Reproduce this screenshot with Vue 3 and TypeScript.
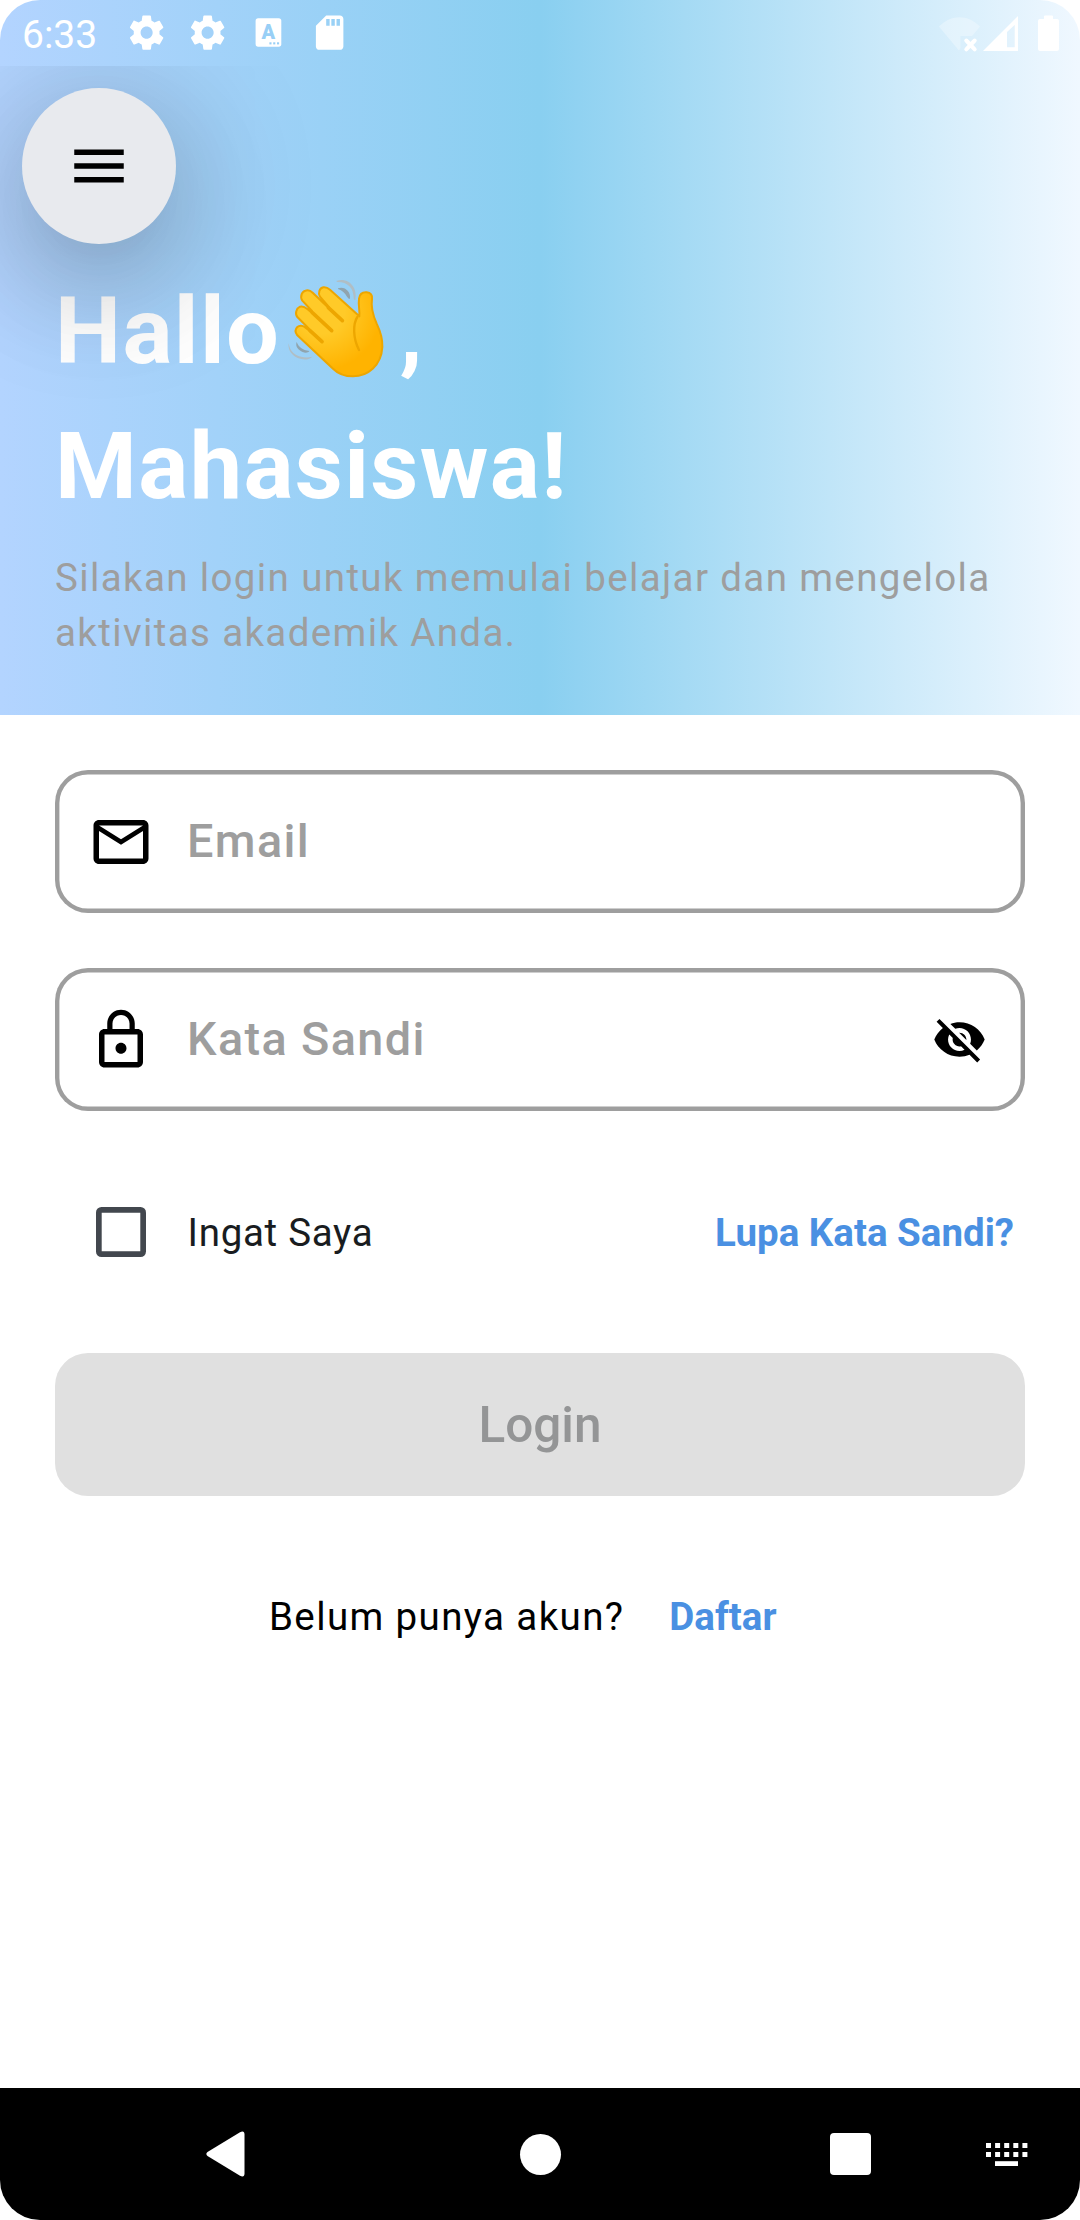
<script setup lang="ts">
interface Field {
  id: string
  label: string
  icon: string
  secret: boolean
}

const fields: Field[] = [
  {
    id: 'email',
    label: 'Email',
    icon: 'M22 6c0-1.1-.9-2-2-2H4c-1.1 0-2 .9-2 2v12c0 1.1.9 2 2 2h16c1.1 0 2-.9 2-2V6zm-2 0l-8 5-8-5h16zm0 12H4V8l8 5 8-5v10z',
    secret: false,
  },
  {
    id: 'password',
    label: 'Kata Sandi',
    icon: 'M12 17c1.1 0 2-.9 2-2s-.9-2-2-2-2 .9-2 2 .9 2 2 2zm6-9h-1V6c0-2.76-2.24-5-5-5S7 3.24 7 6v2H6c-1.1 0-2 .9-2 2v10c0 1.1.9 2 2 2h12c1.1 0 2-.9 2-2V10c0-1.1-.9-2-2-2zM8.9 6c0-1.71 1.39-3.1 3.1-3.1s3.1 1.39 3.1 3.1v2H8.9V6zM18 20H6V10h12v10z',
    secret: true,
  },
]

const gear =
  'M19.43 12.98c.04-.32.07-.64.07-.98s-.03-.66-.07-.98l2.11-1.65c.19-.15.24-.42.12-.64l-2-3.46c-.12-.22-.39-.3-.61-.22l-2.49 1c-.52-.4-1.08-.73-1.69-.98l-.38-2.65C14.46 2.18 14.25 2 14 2h-4c-.25 0-.46.18-.49.42l-.38 2.65c-.61.25-1.17.59-1.69.98l-2.49-1c-.23-.09-.49 0-.61.22l-2 3.46c-.13.22-.07.49.12.64l2.11 1.65c-.04.32-.07.65-.07.98s.03.66.07.98l-2.11 1.65c-.19.15-.24.42-.12.64l2 3.46c.12.22.39.3.61.22l2.49-1c.52.4 1.08.73 1.69.98l.38 2.65c.03.24.24.42.49.42h4c.25 0 .46-.18.49-.42l.38-2.65c.61-.25 1.17-.59 1.69-.98l2.49 1c.23.09.49 0 .61-.22l2-3.46c.12-.22.07-.49-.12-.64l-2.11-1.65zM12 15.5c-1.93 0-3.5-1.57-3.5-3.5s1.57-3.5 3.5-3.5 3.5 1.57 3.5 3.5-1.57 3.5-3.5 3.5z'

const keyColumns = [0, 1, 2, 3, 4]
</script>

<template>
  <div class="phone">
    <header class="hero">
      <div class="status">
        <span class="clock">6:33</span>
        <div class="notices">
          <svg viewBox="0 0 24 24"><path :d="gear" /></svg>
          <svg viewBox="0 0 24 24"><path :d="gear" /></svg>
          <svg viewBox="0 0 41.25 41.25">
            <rect x="7.6" y="6.3" width="25.7" height="28.4" rx="2.6" />
            <text class="badge-letter" x="20.3" y="27.4" text-anchor="middle">A</text>
            <g class="cut">
              <rect x="21.4" y="30.3" width="2.1" height="2.1" />
              <rect x="25.2" y="30.3" width="2.1" height="2.1" />
              <rect x="29" y="30.3" width="2.1" height="2.1" />
            </g>
          </svg>
          <svg viewBox="0 0 24 24">
            <path d="M18 2h-8L4.02 8 4 20c0 1.1.9 2 2 2h12c1.1 0 2-.9 2-2V4c0-1.1-.9-2-2-2zm-6 6h-2V4h2v4zm3 0h-2V4h2v4zm3 0h-2V4h2v4z" />
          </svg>
        </div>
        <svg class="radios" viewBox="0 0 124 40">
          <path class="faint" d="M1 11.5C13 -1 30 -1 42 11.5L34 21H22.5V33L21 35.5Z" />
          <path class="cross" d="M28.3 25.5L36.7 34.3M36.7 25.5L28.3 34.3" />
          <path fill-rule="evenodd" d="M45 36L80 1V36ZM69 17V32.3H76.7V10Z" />
          <path d="M106 4V1.4Q106 .5 107 .5H114Q115 .5 115 1.4V4H119Q121 4 121 6V34Q121 36 119 36H102Q100 36 100 34V6Q100 4 102 4Z" />
        </svg>
      </div>

      <div class="hero-body">
        <button class="menu" type="button" aria-label="Menu">
          <svg viewBox="0 0 24 24"><path d="M3 18h18v-2H3v2zm0-5h18v-2H3v2zm0-7v2h18V6H3z" /></svg>
        </button>
        <h1>
          Hallo<svg class="wave" viewBox="60 50 290 305">
            <defs>
              <radialGradient id="skin" gradientUnits="userSpaceOnUse" cx="160" cy="150" r="200">
                <stop offset="0.35" stop-color="#ffca28" />
                <stop offset="0.9" stop-color="#ffb300" />
              </radialGradient>
            </defs>
            <path fill="#b0bec5" d="M205 62C238 50 270 78 262 119C258 119 257 117 257 113C257 82 238 64 207 65Z" />
            <path fill="#90a4ae" d="M210 84C230 77 249 94 246 115C243 117 240 113 237 109C230 97 223 91 210 86Z" />
            <path fill="#b0bec5" d="M62 249C65 277 91 298 133 289C119 303 90 298 76 285C64 274 60 261 62 249Z" />
            <path fill="#90a4ae" d="M86 245C92 260 103 269 124 272C121 279 105 279 95 270C85 261 83 254 86 245Z" />
            <path
              class="hand"
              d="M274 168C276 150 270 135 273 115C275 101 284 95 296 96C308 97 314 104 312 116C308 140 315 165 326 190C338 215 344 235 343 260C340 315 300 348 255 348C230 348 210 340 195 325L88 225C81 216 82 206 88 200C94 194 104 195 110 200L126 213V208L88 170C80 160 85 144 96 139C106 136 112 141 118 146L132 158V152L103 121C95 109 102 93 112 91C122 88 129 92 134 97L182 143V139L156 109C149 98 155 83 166 81C174 80 180 83 186 88Z"
            />
            <path class="crease wide" d="M126 211L162 244M133 157L191 211M181 142L223 181" />
            <path class="crease" d="M268 170C255 190 254 232 273 269" />
          </svg><span class="comma">,</span><br />Mahasiswa!
        </h1>
        <p>Silakan login untuk memulai belajar dan mengelola aktivitas akademik Anda.</p>
      </div>
    </header>

    <main>
      <div v-for="field in fields" :key="field.id" class="field">
        <svg class="lead" viewBox="0 0 24 24"><path :d="field.icon" /></svg>
        <span class="label">{{ field.label }}</span>
        <svg v-if="field.secret" class="trail" viewBox="0 0 24 24">
          <path d="M12 7c2.76 0 5 2.24 5 5 0 .65-.13 1.26-.36 1.83l2.92 2.92c1.51-1.26 2.7-2.89 3.43-4.75-1.73-4.39-6-7.5-11-7.5-1.4 0-2.74.25-3.98.7l2.16 2.16C10.74 7.13 11.35 7 12 7zM2 4.27l2.28 2.28.46.46C3.08 8.3 1.78 10.02 1 12c1.73 4.39 6 7.5 11 7.5 1.55 0 3.03-.3 4.38-.84l.42.42L19.73 22 21 20.73 3.27 3 2 4.27zM7.53 9.8l1.55 1.55c-.05.21-.08.43-.08.65 0 1.66 1.34 3 3 3 .22 0 .44-.03.65-.08l1.55 1.55c-.67.33-1.41.53-2.2.53-2.76 0-5-2.24-5-5 0-.79.2-1.53.53-2.2zm4.31-.78l3.15 3.15.02-.16c0-1.66-1.34-3-3-3l-.17.01z" />
        </svg>
      </div>

      <div class="options">
        <span class="checkbox" role="checkbox" aria-checked="false"></span>
        <span class="remember">Ingat Saya</span>
        <a class="link forgot">Lupa Kata Sandi?</a>
      </div>

      <button class="login" type="button" disabled>Login</button>

      <div class="signup">
        <span class="question">Belum punya akun?</span>
        <a class="link">Daftar</a>
      </div>
    </main>

    <nav>
      <svg class="back" viewBox="0 0 40 46"><path d="M1.5 21L34 1.2Q38.5 -.8 38.5 3.5V42.5Q38.5 46.8 34 44.8L1.5 25Q-.8 23 1.5 21Z" /></svg>
      <span class="home"></span>
      <span class="recent"></span>
      <svg class="keys" viewBox="0 0 42 23">
        <template v-for="col in keyColumns" :key="col">
          <rect :x="col * 9.1" y="0" width="5" height="5" />
          <rect :x="col * 9.1" y="9" width="5" height="5" />
        </template>
        <rect x="9" y="18.2" width="23" height="4.8" />
      </svg>
    </nav>
  </div>
</template>

<style>
body {
  margin: 0;
  background: #fff;
}
</style>

<style scoped>
.phone {
  width: 1080px;
  height: 2220px;
  display: flex;
  flex-direction: column;
  overflow: hidden;
  border-radius: 40px;
  background: #fff;
  font-family: Roboto, "Liberation Sans", sans-serif;
}
svg {
  display: block;
  flex: none;
}
button {
  border: 0;
  padding: 0;
  font-family: inherit;
}

.hero {
  height: 714.5px;
  flex: none;
  background: linear-gradient(90deg, #b3d4ff 0%, #89cff0 50%, #f0f8ff 100%);
}
.status {
  height: 66px;
  display: flex;
  align-items: center;
  box-sizing: border-box;
  padding: 0 18px 0 22px;
  fill: #fff;
}
.clock {
  width: 103.6px;
  font-size: 39px;
  line-height: 66px;
  padding-top: 3px;
  color: #fff;
}
.notices {
  display: flex;
  gap: 19.8px;
}
.notices svg {
  width: 41.25px;
  height: 41.25px;
}
.badge-letter {
  font-size: 20px;
  font-weight: 900;
  fill: #98cff6;
}
.cut {
  fill: #98cff6;
}
.radios {
  width: 124px;
  height: 40px;
  margin-left: auto;
  margin-top: 3px;
}
.faint {
  opacity: 0.3;
}
.cross {
  fill: none;
  stroke: #fff;
  stroke-width: 4;
  stroke-linecap: round;
}

.hero-body {
  height: 648.5px;
  box-sizing: border-box;
  padding: 22px 55px 0;
  overflow: hidden;
}
.menu {
  position: relative;
  z-index: 1;
  display: flex;
  align-items: center;
  justify-content: center;
  width: 154px;
  height: 156px;
  margin-left: -33px;
  border-radius: 50%;
  background: #e8eaee;
  box-shadow:
    0 30px 41px -19px rgba(0, 0, 0, 0.03),
    0 46px 110px 8px rgba(0, 0, 0, 0.1),
    0 20px 130px 26px rgba(0, 0, 0, 0.15);
}
.menu svg {
  width: 66px;
  height: 66px;
}
h1 {
  margin: 20.3px 0 0;
  font-size: 93.5px;
  line-height: 134.64px;
  font-weight: 700;
  letter-spacing: 1.375px;
  color: #fff;
  white-space: nowrap;
}
.wave {
  display: inline-block;
  width: 96.7px;
  height: 101.7px;
  margin-left: 8px;
  vertical-align: -15.8px;
}
.comma {
  margin-left: 14.5px;
}
.hand {
  fill: url(#skin);
  stroke: #eda600;
  stroke-width: 6;
  stroke-linejoin: round;
}
.crease {
  fill: none;
  stroke: #eda600;
  stroke-width: 7;
  stroke-linecap: round;
}
.wide {
  stroke-width: 11;
}
p {
  margin: 16px 0 0;
  font-size: 38.5px;
  line-height: 55px;
  letter-spacing: 1.375px;
  color: #9e9e9e;
}

main {
  flex: 1;
  padding: 55.5px 55px 0;
}
.field {
  display: flex;
  align-items: center;
  box-sizing: border-box;
  height: 143px;
  margin-bottom: 55px;
  padding: 0 38.5px 0 33px;
  border-radius: 33px;
  box-shadow: inset 0 0 0 4.4px #9e9e9e;
}
.lead {
  width: 66px;
  height: 66px;
}
.label {
  margin-left: 33px;
  padding-bottom: 2px;
  font-size: 46.75px;
  font-weight: 500;
  letter-spacing: 1.375px;
  line-height: 60px;
  color: #9e9e9e;
}
.trail {
  width: 55px;
  height: 55px;
  margin-left: auto;
}
.options {
  display: flex;
  align-items: center;
  height: 66px;
  margin-top: 88px;
  padding: 0 11px 0 41px;
}
.checkbox {
  width: 50px;
  height: 50px;
  border-radius: 5.5px;
  box-shadow: inset 0 0 0 5.7px #42474e;
}
.remember {
  margin-left: 41.5px;
  font-size: 38.5px;
  letter-spacing: 0.7px;
  color: #191c20;
}
.link {
  font-size: 38.5px;
  font-weight: 700;
  color: #4a90e2;
}
.forgot {
  margin-left: auto;
}
.login {
  display: block;
  width: 970px;
  height: 143px;
  margin-top: 88px;
  border-radius: 33px;
  background: #e0e0e0;
  color: #949596;
  font-size: 49.5px;
  font-weight: 500;
}
.signup {
  display: flex;
  align-items: baseline;
  gap: 45px;
  margin: 98px 0 0 214px;
}
.question {
  font-size: 38.5px;
  letter-spacing: 1.375px;
  color: #000;
}

nav {
  display: flex;
  align-items: center;
  height: 132px;
  flex: none;
  box-sizing: border-box;
  padding-left: 206px;
  background: #000;
  fill: #fff;
}
.back {
  width: 40px;
  height: 46px;
}
.home {
  width: 41px;
  height: 41px;
  margin-left: 273.5px;
  border-radius: 50%;
  background: #fff;
}
.recent {
  width: 41.3px;
  height: 41.3px;
  margin-left: 269.5px;
  border-radius: 4px;
  background: #fff;
}
.keys {
  width: 42px;
  height: 23px;
  margin-left: 114.7px;
}
</style>
